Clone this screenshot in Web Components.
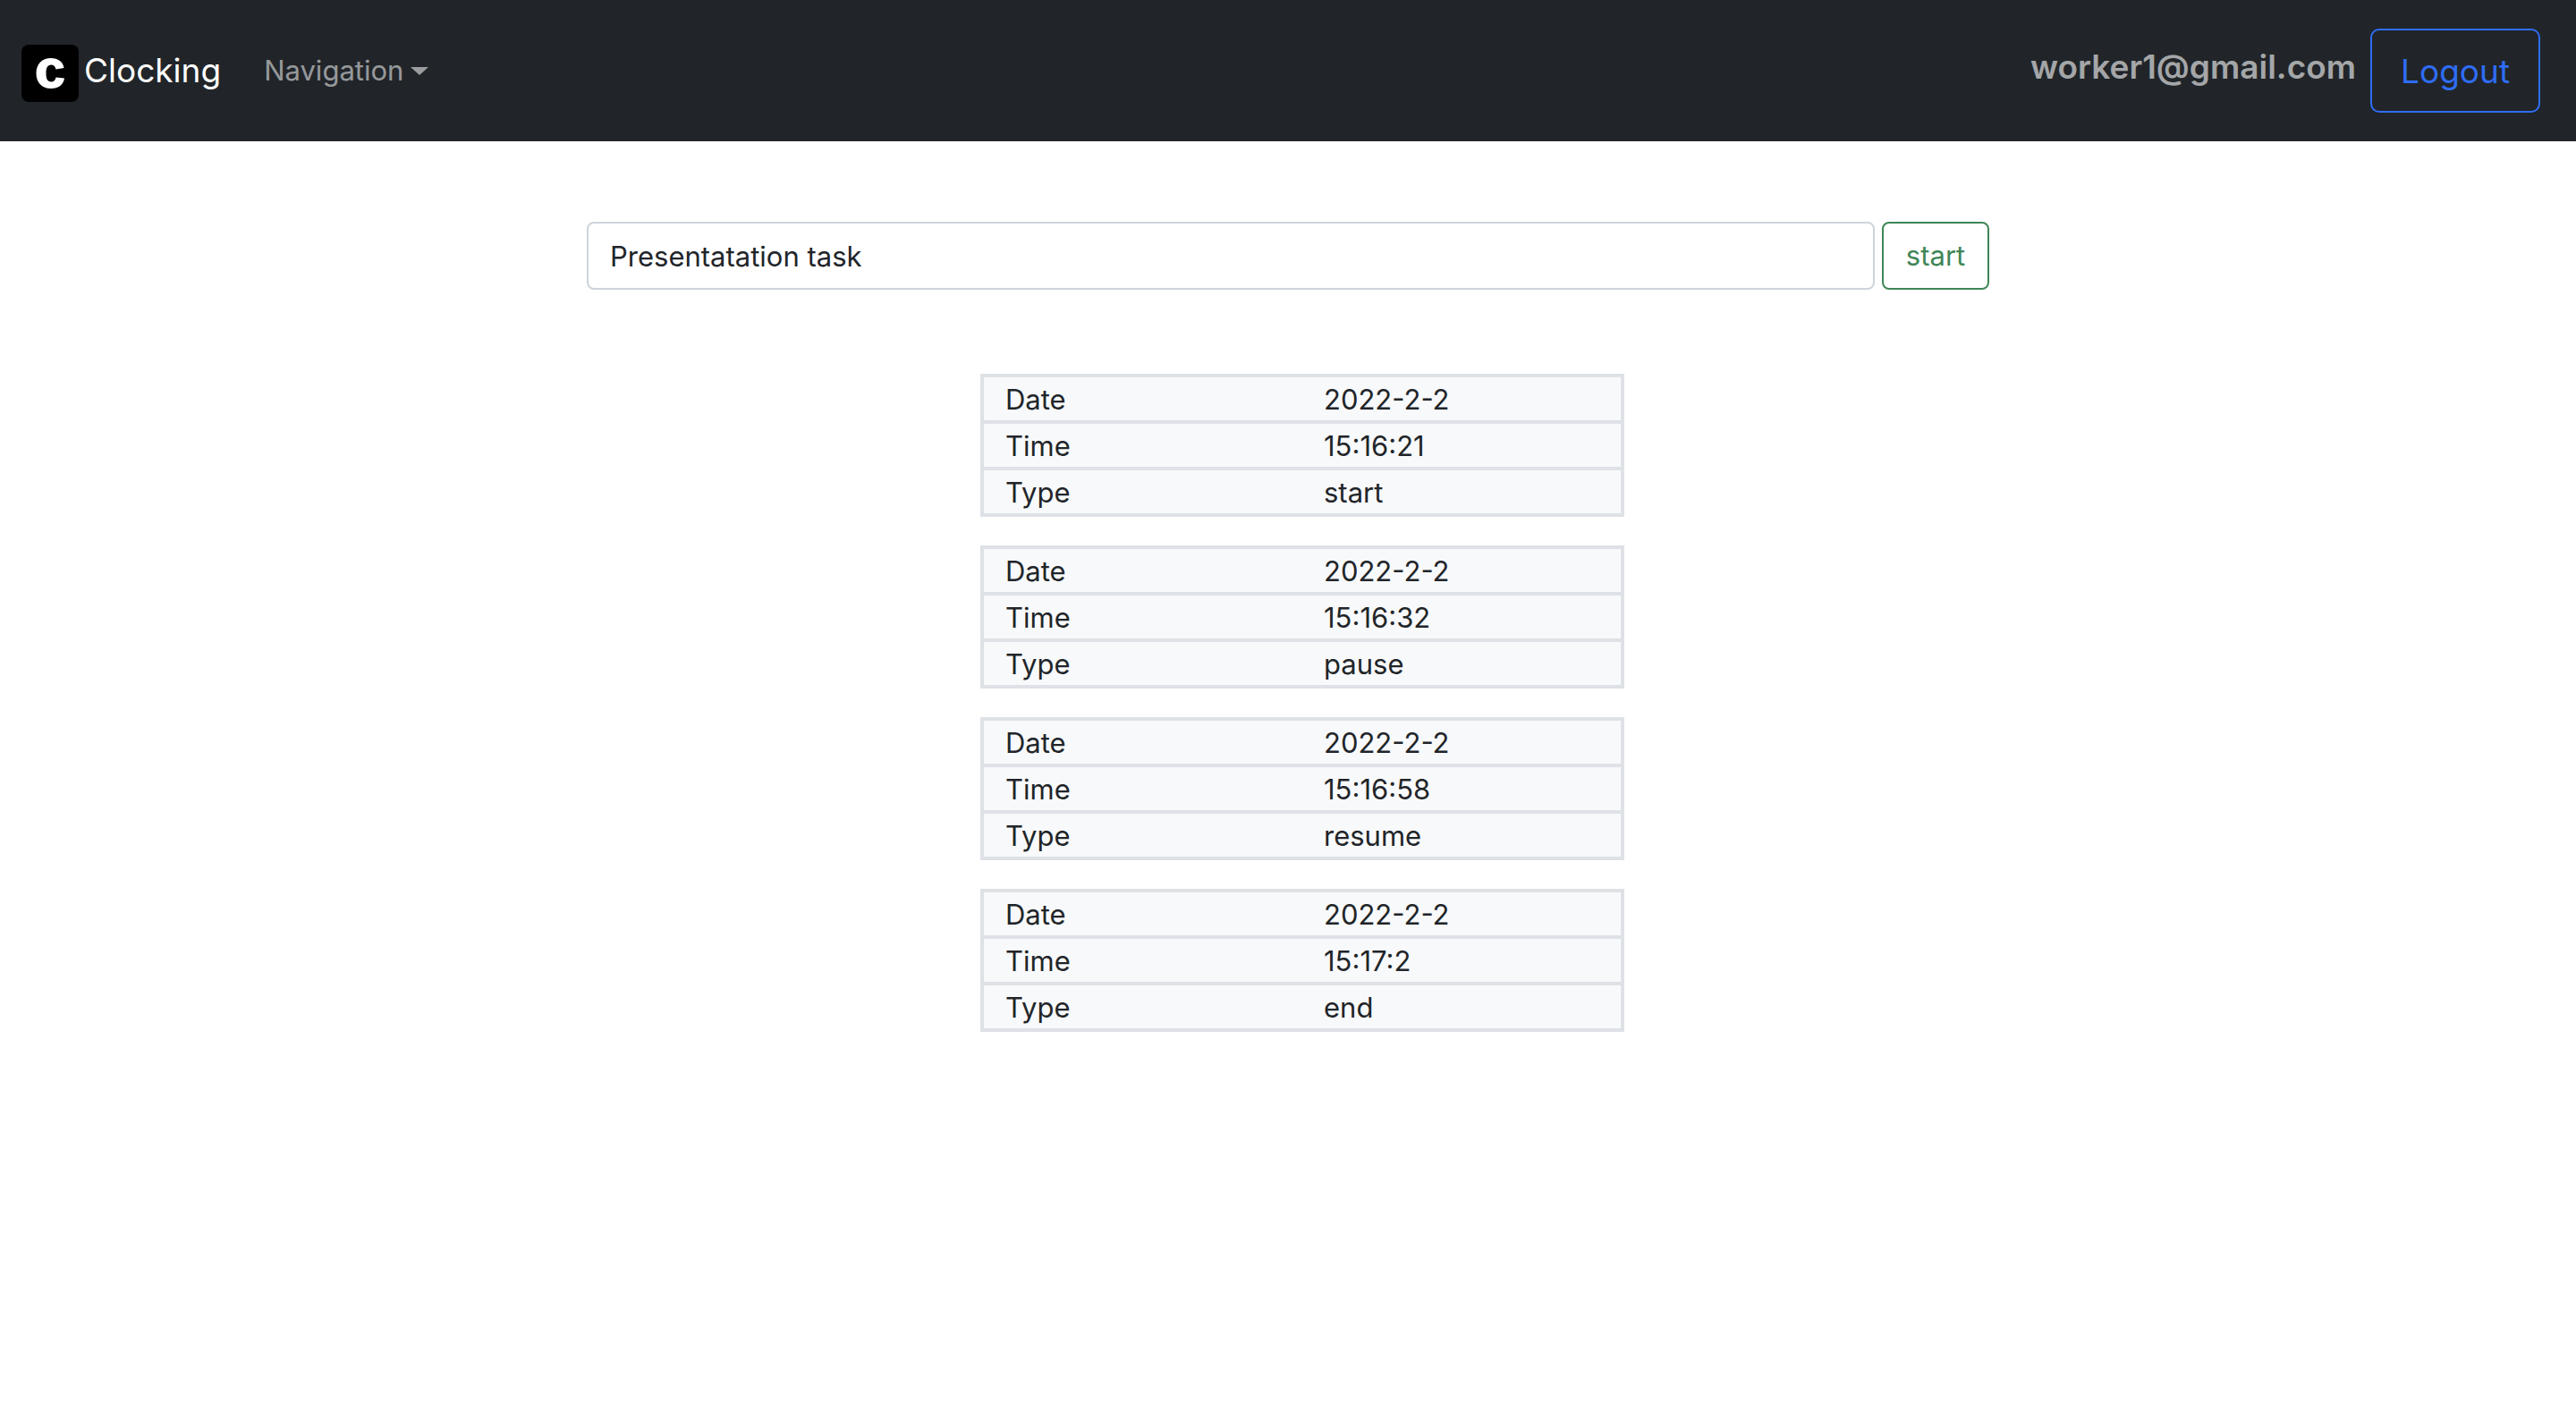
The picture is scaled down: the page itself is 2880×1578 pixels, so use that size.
<!DOCTYPE html>
<html lang="en">
<head>
<meta charset="utf-8">
<meta name="viewport" content="width=device-width, initial-scale=1">
<title>Clocking</title>
<style>
  body { margin: 0; background: #fff; color: #212529; font: 400 31px/48px Inter, "Liberation Sans", sans-serif; }
</style>
</head>
<body>
<clocking-app></clocking-app>

<template id="nav-bar">
  <style>
    :host { display: block; background: #212529; }
    nav { display: flex; align-items: center; padding: 32px 40px 32px 24px; }
    .brand { display: flex; align-items: center; gap: 6px; color: #fff; font-size: 37px; line-height: 60px; text-decoration: none; }
    .logo { width: 64px; height: 64px; margin-top: 6px; }
    .menu { margin-left: 32px; padding: 16px; border: 0; background: none; color: rgba(255, 255, 255, .55); font: inherit; display: flex; align-items: center; gap: 8px; }
    .menu::after { content: ""; border: 10px solid transparent; border-top: 9px solid; border-bottom: 0; }
    .account { display: flex; align-items: center; gap: 16px; margin-left: auto; }
    .mail { color: rgba(255, 255, 255, .6); font-size: 37px; line-height: 60px; font-weight: 600; padding-bottom: 8px; }
    .logout { box-sizing: border-box; padding: 16px 32px 14px; border: 2px solid #2f6df6; border-radius: 10px; background: none; color: #2f6df6; font: inherit; font-size: 37px; line-height: 60px; }
  </style>
  <nav>
    <a class="brand" href="#">
      <svg class="logo" viewBox="0 0 64 64" aria-hidden="true">
        <rect width="64" height="64" rx="8" fill="#000"/>
        <path d="M47.500 26C46.500 19 41 15 33 15C22.500 15 16.500 22 16.500 32C16.500 42 22.500 49 33 49C41.500 49 47 44.500 48 37.500L38.500 36.500C38 40 36 41.500 33.300 41.500C29 41.500 27.500 38 27.500 32C27.500 26 29 22.500 33.300 22.500C36 22.500 37.700 24 38.500 27.500Z" fill="#fff"/>
      </svg>
      <slot name="brand"></slot>
    </a>
    <button class="menu" type="button" aria-haspopup="true"><slot name="menu"></slot></button>
    <div class="account">
      <span class="mail"><slot name="mail"></slot></span>
      <button class="logout" type="button">Logout</button>
    </div>
  </nav>
</template>

<template id="task-form">
  <style>
    :host { display: block; }
    form { display: flex; gap: 8px; }
    input, button { box-sizing: border-box; padding: 12px 24px; border-radius: 8px; font: inherit; background: #fff; }
    input { flex: 1; min-width: 0; height: 76px; border: 2px solid #ced4da; color: #212529; }
    button { min-width: 120px; border: 2px solid #3f8657; color: #3f8657; }
  </style>
  <form onsubmit="return false">
    <input type="text" aria-label="Task" value="Presentatation task">
    <button type="submit">start</button>
  </form>
</template>

<template id="clock-entry">
  <style>
    :host { display: block; }
    table { width: 100%; table-layout: fixed; border-collapse: separate; border-spacing: 0; border: 4px solid #dee2e6; background: #f8f9fa; }
    th, td { padding: 2px 24px 0; line-height: 46px; font-weight: 400; text-align: left; }
    tr + tr > * { border-top: 4px solid #dee2e6; }
  </style>
  <table>
    <tbody>
      <tr><th scope="row">Date</th><td><slot name="date"></slot></td></tr>
      <tr><th scope="row">Time</th><td><slot name="time"></slot></td></tr>
      <tr><th scope="row">Type</th><td><slot name="type"></slot></td></tr>
    </tbody>
  </table>
</template>

<template id="clocking-app">
  <style>
    :host { display: block; }
    main { display: flex; flex-direction: column; align-items: center; padding: 90px 24px; gap: 94px; }
    task-form { width: 100%; max-width: 1568px; }
    .entries { display: flex; flex-direction: column; gap: 32px; width: 25%; min-width: 720px; padding-left: 32px; }
  </style>
  <nav-bar>
    <span slot="brand">Clocking</span>
    <span slot="menu">Navigation</span>
    <span slot="mail">worker1@gmail.com</span>
  </nav-bar>
  <main>
    <task-form></task-form>
    <div class="entries">
      <clock-entry><span slot="date">2022-2-2</span><span slot="time">15:16:21</span><span slot="type">start</span></clock-entry>
      <clock-entry><span slot="date">2022-2-2</span><span slot="time">15:16:32</span><span slot="type">pause</span></clock-entry>
      <clock-entry><span slot="date">2022-2-2</span><span slot="time">15:16:58</span><span slot="type">resume</span></clock-entry>
      <clock-entry><span slot="date">2022-2-2</span><span slot="time">15:17:2</span><span slot="type">end</span></clock-entry>
    </div>
  </main>
</template>

<script>
  class TemplateElement extends HTMLElement {
    constructor() {
      super();
      const template = document.getElementById(this.localName);
      this.attachShadow({ mode: "open" }).append(template.content.cloneNode(true));
    }
  }
  for (const name of ["nav-bar", "task-form", "clock-entry", "clocking-app"]) {
    customElements.define(name, class extends TemplateElement {});
  }
</script>
</body>
</html>
